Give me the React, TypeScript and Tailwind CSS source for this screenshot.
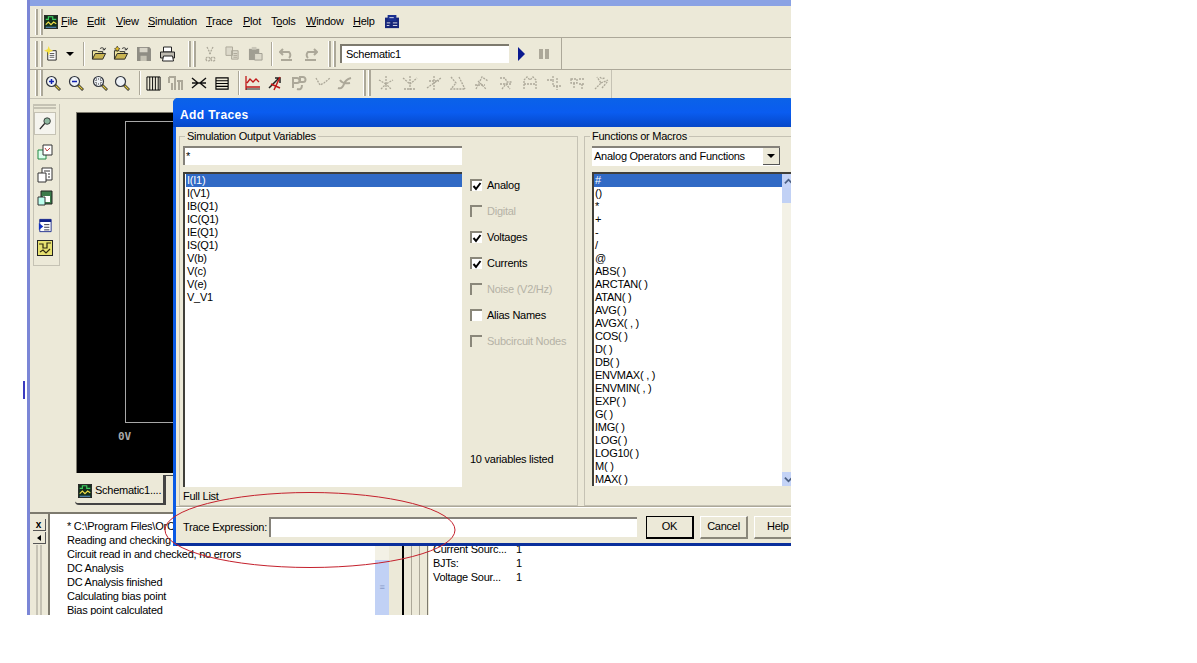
const sans = { fontFamily: '"Liberation Sans", Arial, sans-serif' }

const functions = ['#', '()', '*', '+', '-', '/', '@', 'ABS( )', 'ARCTAN( )', 'ATAN( )', 'AVG( )', 'AVGX( , )', 'COS( )', 'D( )', 'DB( )', 'ENVMAX( , )', 'ENVMIN( , )', 'EXP( )', 'G( )', 'IMG( )', 'LOG( )', 'LOG10( )', 'M( )', 'MAX( )']
const variables = ['I(I1)', 'I(V1)', 'IB(Q1)', 'IC(Q1)', 'IE(Q1)', 'IS(Q1)', 'V(b)', 'V(c)', 'V(e)', 'V_V1']
const filters = [
  { label: 'Analog', checked: true },
  { label: 'Digital', disabled: true },
  { label: 'Voltages', checked: true },
  { label: 'Currents', checked: true },
  { label: 'Noise (V2/Hz)', disabled: true },
  { label: 'Alias Names' },
  { label: 'Subcircuit Nodes', disabled: true },
]
const logLines = ['* C:\\Program Files\\OrC', 'Reading and checking', 'Circuit read in and checked, no errors', 'DC Analysis', 'DC Analysis finished', 'Calculating bias point', 'Bias point calculated']

function Icon({ children, className = 'w-4 h-4' }: { children: React.ReactNode; className?: string }) {
  return (
    <svg viewBox="0 0 16 16" className={`${className} shrink-0`} fill="none">
      {children}
    </svg>
  )
}

function AppIcon() {
  return (
    <Icon className="w-[14px] h-[16px]">
      <rect x="0.5" y="0.5" width="15" height="15" fill="#14301c" stroke="#222" />
      <path d="M2 5h3V2h5v3h4" stroke="#3fd060" strokeWidth="1.3" />
      <path d="M2 11l3-3 3 3 3-3 3 2" stroke="#f4e04a" strokeWidth="1.3" />
      <path d="M2 14h12" stroke="#6aa8f0" />
    </Icon>
  )
}

function Mag({ kind }: { kind: 'in' | 'out' | 'area' | 'fit' }) {
  return (
    <Icon className="w-[16px] h-[16px]">
      <path d="M10 10l5 5" stroke="#222" strokeWidth="2.6" />
      <path d="M10.5 10.5l4 4" stroke="#e0c840" strokeWidth="1.2" />
      <circle cx="6.5" cy="6.5" r="5" fill="#eef2f6" stroke="#30343c" strokeWidth="1.2" />
      {kind === 'in' && <path d="M4 6.5h5M6.5 4v5" stroke="#1020b0" strokeWidth="1.5" />}
      {kind === 'out' && <path d="M4 6.5h5" stroke="#1020b0" strokeWidth="1.5" />}
      {kind === 'area' && <rect x="4" y="4" width="5" height="5" stroke="#333" strokeDasharray="1 1" />}
    </Icon>
  )
}

function Folder({ star }: { star?: boolean }) {
  return (
    <Icon className="w-[16px] h-[15px]">
      <path d="M1 14V5h5l1 1h5v2" stroke="#222" fill="#f0e6a0" />
      <path d="M1 14l3-6h11l-3 6z" fill="#c9b452" stroke="#222" />
      {star ? (
        <path d="M4 0l1 2 2 1-2 1-1 2-1-2-2-1 2-1z" fill="#e8c020" stroke="#222" strokeWidth="0.6" />
      ) : null}
      <path d="M9 3c2-2 4-1 5 1M14 4l1-2M14 4l-2 0" stroke="#222" />
    </Icon>
  )
}

function Ghost({ d, solid }: { d: string; solid?: boolean }) {
  return (
    <Icon className="w-[16px] h-[16px]">
      <path d={d} stroke="#aca899" strokeWidth={solid ? 2 : 1.3} strokeDasharray={solid ? undefined : '2 1'} />
    </Icon>
  )
}

function Grip() {
  return (
    <div className="flex gap-[2px] h-[26px] shrink-0">
      <div className="w-[3px] border-l border-white border-r-2 border-r-[#aca899]" />
      <div className="w-[3px] border-l border-white border-r-2 border-r-[#aca899]" />
    </div>
  )
}

function Sep() {
  return <div className="w-[2px] h-[24px] border-l border-[#aca899] border-r border-r-white shrink-0" />
}

function Chevron({ up }: { up?: boolean }) {
  return (
    <svg viewBox="0 0 10 10" className="w-[9px] h-[9px]" fill="none">
      <path d={up ? 'M1 7l4-4 4 4' : 'M1 3l4 4 4-4'} stroke="#4d6185" strokeWidth="2" />
    </svg>
  )
}

function CheckRow({ label, checked, disabled }: { label: string; checked?: boolean; disabled?: boolean }) {
  return (
    <div className="h-[26px] flex items-center gap-[5px]">
      <div className={`w-[12px] h-[12px] border-t-2 border-l-2 border-t-[#8a877a] border-l-[#8a877a] ${disabled ? 'bg-[#ece9d8]' : 'bg-white'} flex items-center justify-center`}>
        {checked && (
          <svg viewBox="0 0 10 10" className="w-[10px] h-[10px]">
            <path d="M1.5 5l2.5 3L8.5 2" stroke="#000" strokeWidth="2" fill="none" />
          </svg>
        )}
      </div>
      <span className={disabled ? 'text-[#b5b2a6]' : 'text-black'}>{label}</span>
    </div>
  )
}

function Group({ title, className, children }: { title: string; className: string; children: React.ReactNode }) {
  return (
    <div className={`relative border border-[#c5c2b4] ${className}`}>
      <span className="absolute left-[5px] -top-[8px] bg-[#ece9d8] px-[2px] leading-[14px] text-black whitespace-nowrap">{title}</span>
      {children}
    </div>
  )
}

function AddTraces() {
  return (
    <div className="absolute left-[143px] top-[98px] w-[621px] h-[448px] rounded-t-[5px] bg-[#0a5ae6] overflow-hidden flex flex-col text-[11px] tracking-[-0.25px] leading-[13px]">
      <div className="h-[29px] shrink-0 bg-gradient-to-b from-[#0b62e8] via-[#0a5cf0] to-[#0648c8] flex items-center pl-[7px] pt-[5px] text-white font-bold text-[12px] tracking-[0.4px]" style={sans}>
        Add Traces
      </div>
      <div className="flex-1 ml-[3px] bg-[#ece9d8] flex flex-col min-h-0 border-b-[3px] border-[#0a2f9c]">
        <div className="h-[380px] shrink-0 flex pl-[3px] pt-[9px] gap-[6px] border-b border-[#aca899]">
          <Group title="Simulation Output Variables" className="w-[399px] h-[370px] shrink-0">
            <div className="flex pl-[3px] pt-[9px] gap-[8px]">
              <div className="w-[279px] flex flex-col gap-[7px]">
                <div className="h-[19px] bg-white border-t-2 border-l-2 border-t-[#85827a] border-l-[#85827a] pl-[1px] pt-[2px]">*</div>
                <div className="h-[315px] bg-white border-t-2 border-l-2 border-t-[#403f3a] border-l-[#403f3a] pl-[1px]">
                  {variables.map((v, i) => (
                    <div key={v} className={`h-[13px] pl-[1px] ${i === 0 ? 'bg-[#316ac5] text-white' : 'text-black'}`}>{v}</div>
                  ))}
                </div>
              </div>
              <div className="flex-1 flex flex-col">
                <div className="h-[26px]" />
                <div>
                  {filters.map((f) => (
                    <CheckRow key={f.label} label={f.label} checked={f.checked} disabled={f.disabled} />
                  ))}
                </div>
                <div className="mt-[99px]">10 variables listed</div>
              </div>
            </div>
            <div className="mt-[3px] pl-[3px]">Full List</div>
          </Group>
          <Group title="Functions or Macros" className="flex-1 h-[370px] border-r-0 pl-[7px]">
            <div className="pt-[9px] flex flex-col">
              <div className="w-[188px] h-[20px] bg-white border-t-2 border-t-[#85827a] flex items-center pl-[2px] pb-[2px] relative">
                <span className="whitespace-nowrap">Analog Operators and Functions</span>
                <div className="absolute right-[0px] top-0 w-[17px] h-[17px] bg-[#ece9d8] border-r border-b border-[#555] flex items-center justify-center">
                  <div className="w-0 h-0 border-x-[4px] border-x-transparent border-t-[4px] border-t-black" />
                </div>
              </div>
              <div className="mt-[6px] h-[314px] bg-white border-t-2 border-l-2 border-t-[#403f3a] border-l-[#403f3a] flex overflow-hidden">
                <div className="w-[188px] overflow-hidden">
                  {functions.map((f, i) => (
                    <div key={f} className={`h-[13px] pl-[1px] whitespace-nowrap ${i === 0 ? 'bg-[#316ac5] text-white' : 'text-black'}`}>{f}</div>
                  ))}
                </div>
                <div className="flex-1 bg-[#f3f1e6] flex flex-col justify-between">
                  <div>
                    <div className="h-[14px] bg-[#c4d3f6] flex items-center justify-center"><Chevron up /></div>
                    <div className="h-[15px] bg-[#c1d1f5]" />
                  </div>
                  <div className="h-[14px] bg-[#c4d3f6] flex items-center justify-center"><Chevron /></div>
                </div>
              </div>
            </div>
          </Group>
        </div>
        <div className="flex items-center flex-1 pl-[7px] pt-[3px] border-t border-white">
          <span className="w-[86px] shrink-0 whitespace-nowrap">Trace Expression:</span>
          <div className="w-[368px] h-[20px] bg-white border-t-2 border-l-2 border-t-[#85827a] border-l-[#85827a] shrink-0" />
          <button className="ml-[9px] w-[48px] h-[23px] bg-[#ece9d8] border border-black border-b-2 border-r-2 shrink-0">OK</button>
          <button className="ml-[6px] w-[48px] h-[23px] bg-[#ece9d8] border-t border-l border-t-white border-l-white border-r-2 border-b-2 border-r-[#8a877a] border-b-[#8a877a] shrink-0">Cancel</button>
          <button className="ml-[6px] w-[48px] h-[23px] bg-[#ece9d8] border-t border-l border-t-white border-l-white border-r-2 border-b-2 border-r-[#8a877a] border-b-[#8a877a] shrink-0 text-left pl-[12px]">Help</button>
        </div>
      </div>
    </div>
  )
}

export default function App() {
  return (
    <div className="relative w-[1197px] h-[663px] bg-white overflow-hidden" style={sans}>
      <div className="absolute left-[23px] top-[381px] w-[2px] h-[18px] bg-[#3a3ac0]" />
      <div className="relative ml-[27px] w-[764px] h-[615px] overflow-hidden bg-[#ece9d8] flex flex-col border-l-[3px] border-l-[#7b86d6] text-[11px] tracking-[-0.25px] leading-[13px] text-black">
        <div className="h-[6px] shrink-0 bg-[#8aa2e4]" />

        {/* menu bar */}
        <div className="h-[32px] shrink-0 flex items-center pl-[5px] border-b border-[#aca899]">
          <Grip />
          <div className="ml-[1px]"><AppIcon /></div>
          <nav className="flex ml-[3px]">
            <span className="w-[26px]"><u>F</u>ile</span>
            <span className="w-[29px]"><u>E</u>dit</span>
            <span className="w-[32px]"><u>V</u>iew</span>
            <span className="w-[58px]"><u>S</u>imulation</span>
            <span className="w-[37px]"><u>T</u>race</span>
            <span className="w-[28px]"><u>P</u>lot</span>
            <span className="w-[35px]">T<u>o</u>ols</span>
            <span className="w-[47px]"><u>W</u>indow</span>
            <span className="w-[32px]"><u>H</u>elp</span>
          </nav>
          <Icon className="w-[14px] h-[14px]">
            <rect x="0" y="3" width="16" height="12" fill="#16267a" />
            <rect x="3" y="0" width="10" height="7" fill="#1a3090" />
            <path d="M5 3h5M2 9h4M9 9h5M2 12h3M9 12h5" stroke="#e8e8f0" />
          </Icon>
        </div>

        {/* standard toolbar */}
        <div className="h-[32px] shrink-0 flex items-center border-b border-[#aca899]">
          <div className="w-[532px] h-full flex items-center pl-[5px] border-r border-[#aca899]">
            <Grip />
            <div className="ml-[1px]">
              <Icon className="w-[15px] h-[17px]">
                <path d="M4 5h9v10H4z" fill="#fff" stroke="#222" />
                <path d="M6 8h5M6 10h5M6 12h5" stroke="#555" />
                <path d="M5 0l1.2 3.5L10 5 6.2 6.4 5 10 3.8 6.4 0 5l3.8-1.5z" fill="#f5e040" />
              </Icon>
            </div>
            <div className="ml-[7px] w-0 h-0 border-x-[4px] border-x-transparent border-t-[4px] border-t-black" />
            <div className="ml-[9px]"><Sep /></div>
            <div className="ml-[6px]"><Folder /></div>
            <div className="ml-[6px]"><Folder star /></div>
            <div className="ml-[8px]">
              <Icon className="w-[14px] h-[14px]">
                <path d="M0 0h14l2 2v14H0z" fill="#8f8d84" />
                <path d="M3 1h9v5H3z" fill="#d8d5c8" />
                <path d="M4 10h7v6H4z" fill="#c5c2b4" />
              </Icon>
            </div>
            <div className="ml-[8px]">
              <Icon className="w-[17px] h-[16px]">
                <path d="M4 1h8v5H4z" fill="#fff" stroke="#222" />
                <path d="M1 6h14v6H1z" fill="#bdbab0" stroke="#222" />
                <path d="M4 10h9l1 5H3z" fill="#fff" stroke="#222" />
              </Icon>
            </div>
            <div className="ml-[12px]"><Grip /></div>
            <div className="ml-[6px]"><Ghost d="M5 1l4 8M11 1L7 9M4 13a2 2 0 104 0 2 2 0 10-4 0M9 13a2 2 0 104 0 2 2 0 10-4 0" /></div>
            <div className="ml-[7px]">
              <Icon className="w-[15px] h-[15px]">
                <path d="M1 1h7v9H1zM7 5h7v9H7z" fill="#dcd9ca" stroke="#aca899" />
                <path d="M9 8h4M9 10h4M9 12h4" stroke="#aca899" />
              </Icon>
            </div>
            <div className="ml-[8px]">
              <Icon className="w-[15px] h-[15px]">
                <path d="M1 3h11v12H1z" fill="#a09e92" />
                <path d="M4 1h5v3H4z" fill="#c9c6b8" />
                <path d="M7 8h8v7H7z" fill="#dcd9ca" stroke="#a09e92" />
              </Icon>
            </div>
            <div className="ml-[8px]"><Sep /></div>
            <div className="ml-[6px]"><Ghost solid d="M4 3L1 6l3 3M1 6h9a4 4 0 010 6M2 14h11" /></div>
            <div className="ml-[7px]"><Ghost solid d="M12 3l3 3-3 3M15 6H6a4 4 0 000 6M3 14h11" /></div>
            <div className="ml-[10px]"><Grip /></div>
            <div className="ml-[4px] w-[169px] h-[19px] bg-white border-t-2 border-l-2 border-t-[#7d7a6e] border-l-[#7d7a6e] pl-[4px] flex items-center">Schematic1</div>
            <div className="ml-[9px] w-0 h-0 border-y-[7px] border-y-transparent border-l-[7px] border-l-[#0a1a90]" />
            <div className="ml-[14px] flex gap-[2px]">
              <div className="w-[4px] h-[10px] bg-[#aca899]" />
              <div className="w-[4px] h-[10px] bg-[#aca899]" />
            </div>
          </div>
        </div>

        {/* probe toolbar */}
        <div className="h-[29px] shrink-0 flex items-center">
          <div className="w-[582px] h-full flex items-center pl-[5px] pb-[2px] border-r border-b border-[#c5c2b4]">
            <Grip />
            <div className="ml-[2px]"><Mag kind="in" /></div>
            <div className="ml-[7px]"><Mag kind="out" /></div>
            <div className="ml-[8px]"><Mag kind="area" /></div>
            <div className="ml-[6px]"><Mag kind="fit" /></div>
            <div className="ml-[9px]"><Sep /></div>
            <div className="ml-[5px]">
              <Icon className="w-[15px] h-[15px]"><path d="M1 1h14v14H1zM4 1v14M7 1v14M10 1v14M13 1v14" stroke="#000" /></Icon>
            </div>
            <div className="ml-[7px]"><Ghost solid d="M1 2h6v13M1 2v6M9 6h6M11 6v9M14 6v9M4 8v7" /></div>
            <div className="ml-[7px]">
              <Icon><path d="M1 3l6 5-6 5M15 3L9 8l6 5M1 8h14" stroke="#111" strokeWidth="1.4" /></Icon>
            </div>
            <div className="ml-[8px]">
              <Icon className="w-[15px] h-[15px]"><path d="M1 2h13v12H1zM1 5h13M1 8h13M1 11h13" stroke="#000" strokeWidth="1.2" /></Icon>
            </div>
            <div className="ml-[8px]"><Sep /></div>
            <div className="ml-[5px]">
              <Icon><path d="M1 1v14M1 12h14M2 8l3-4 3 3 3-3 3 3" stroke="#c01818" strokeWidth="1.3" /><path d="M1 14h14" stroke="#222" /></Icon>
            </div>
            <div className="ml-[7px]">
              <Icon><path d="M1 13L11 3M7 3h5v5" stroke="#222" strokeWidth="1.5" /><path d="M3 9l9 4M12 2L6 15" stroke="#c01818" strokeWidth="1.5" /></Icon>
            </div>
            <div className="ml-[7px]"><Ghost solid d="M2 13V3h4a2 2 0 010 5H2M9 8V2h3a2 2 0 010 5H9M6 14c3 1 5 0 5-4" /></div>
            <div className="ml-[8px]"><Ghost d="M1 3l4 7 4-2 6-5" /></div>
            <div className="ml-[6px]"><Ghost solid d="M1 13c3 1 5-1 6-4s3-5 7-6M3 5c2 3 5 4 10 3" /></div>
            <div className="ml-[10px]"><Grip /></div>
            {['M8 1v14M1 5l7 4 7-4M3 14l5-5 5 5', 'M1 3l7 6 7-6M8 1v14M2 14h12', 'M1 13L15 3M8 1v14M3 6h10', 'M1 2l5 6-5 6h14M9 2l6 12', 'M2 14L8 2l6 4M4 6l8 8M1 10h10', 'M2 3h5l2 4h5M2 9h12M4 14l4-5 4 5', 'M2 14V5l3-3 3 3 3-3 3 3v9M2 9h12', 'M1 5h6v6h8M7 1v4M11 8V2M11 11v4', 'M1 4h6v4H1zM9 4h6M9 9h6M4 8v6M12 9v6', 'M1 14L7 8 3 2M7 8l7-3M6 2c1 2 4 2 5 0M8 13l6-7'].map((d, i) => (
              <div key={d} className={i === 0 ? 'ml-[7px]' : 'ml-[8px]'}><Ghost d={d} /></div>
            ))}
          </div>
        </div>

        {/* workspace */}
        <div className="h-[413px] shrink-0 flex">
          <div className="w-[46px] shrink-0 pl-[3px] pt-[5px]">
            <div className="w-[27px] h-[162px] pr-[3px] border border-t-0 border-[#c5c2b4] flex flex-col items-center">
              <div className="w-full flex flex-col gap-[1px] pb-[3px]">
                <div className="h-[2px] border-y border-[#c5c2b4]" />
                <div className="h-[2px] border-y border-[#c5c2b4]" />
              </div>
              <div className="w-[22px] h-[23px] bg-[#f5f4ee] border border-[#c5c2b4] flex items-center justify-center">
                <Icon className="w-[13px] h-[13px]"><circle cx="10" cy="5" r="4" fill="#8fb8a0" stroke="#222" /><path d="M7 8l-6 7" stroke="#222" strokeWidth="1.5" /></Icon>
              </div>
              <div className="mt-[9px]">
                <Icon><path d="M1 6h8v9H1z" fill="#dfe" stroke="#284" /><path d="M6 1h9v10H6z" fill="#fff" stroke="#333" /><path d="M8 4l2 3 3-3" stroke="#c04040" /></Icon>
              </div>
              <div className="mt-[7px]">
                <Icon><path d="M5 1h10v12H5z" fill="#fff" stroke="#333" /><path d="M1 6h8v9H1z" fill="#fff" stroke="#333" /><path d="M7 4h6M11 7h2M11 10h2" stroke="#333" /></Icon>
              </div>
              <div className="mt-[7px]">
                <Icon><path d="M4 1h11v13H4z" fill="#3a7a4a" stroke="#222" /><path d="M6 6h7v6H6z" fill="#fff" /><path d="M1 7h7v8H1z" fill="#bfe" stroke="#333" /></Icon>
              </div>
              <div className="mt-[12px]">
                <Icon className="w-[14px] h-[15px]"><path d="M2 1h13v14H2z" fill="#fff" stroke="#112288" /><path d="M2 1h13v3H2z" fill="#112288" /><path d="M7 7h6M7 10h6M7 13h6" stroke="#223" /><path d="M1 5l5 4-5 4z" fill="#1030c0" /></Icon>
              </div>
              <div className="mt-[7px]">
                <Icon className="w-[16px] h-[16px]"><rect x="0.5" y="0.5" width="15" height="15" fill="#e6e070" stroke="#222" /><path d="M2 4h4v4h4V3h4M3 12l3-2 3 3 4-4" stroke="#302a10" strokeWidth="1.2" /></Icon>
              </div>
            </div>
          </div>
          <div className="flex-1 flex flex-col pt-[13px] min-w-0">
            <div className="h-[361px] bg-black border-t border-l border-[#7d7a6e] pt-[8px] pl-[48px]">
              <div className="h-[302px] border-t border-l border-[#a8a8a8]">
                <div className="h-[301px] border-b border-[#a8a8a8]" />
              </div>
              <div className="-ml-[7px] mt-[7px] w-[16px] text-[#a8a8a8] font-bold text-[11px] tracking-normal" style={{ fontFamily: '"DejaVu Sans Mono", monospace' }}>0V</div>
            </div>
            <div className="flex pt-[2px] h-[39px] -ml-[1px]">
              <div className="w-[90px] h-[30px] bg-[#ece9d8] border-r-2 border-b-2 border-r-[#444] border-b-[#444] rounded-bl-[4px] flex items-center pl-[3px] pt-[3px] gap-[3px]">
                <AppIcon />
                <span className="whitespace-nowrap">Schematic1....</span>
              </div>
              <div className="w-[10px] h-[30px] border-l border-t border-[#444]" />
            </div>
          </div>
        </div>

        {/* output panels */}
        <div className="flex-1 flex min-h-0 border-t-2 border-[#7d7a6e]">
          <div className="w-[20px] shrink-0 flex flex-col items-center pt-[5px] gap-[1px] border-r-2 border-[#7d7a6e]">
            <div className="w-[13px] h-[12px] bg-[#ece9d8] border-r border-b border-[#555] flex items-center justify-center text-[10px] font-bold leading-none">x</div>
            <div className="w-[13px] h-[12px] bg-[#ece9d8] border-r border-b border-[#555] flex items-center justify-center">
              <div className="w-0 h-0 border-y-[3px] border-y-transparent border-r-[4px] border-r-black" />
            </div>
            <div className="flex-1 flex gap-[2px]">
              <div className="w-[2px] bg-[#c5c2b4]" />
              <div className="w-[2px] bg-[#c5c2b4]" />
            </div>
          </div>
          <div className="w-[325px] shrink-0 bg-white pl-[17px] pt-[5px] leading-[14px] whitespace-nowrap overflow-hidden">
            {logLines.map((l) => <div key={l}>{l}</div>)}
          </div>
          <div className="w-[14px] shrink-0 bg-[#f3f1e6] flex flex-col justify-end">
            <div className="h-[55px] bg-[#c1d1f5] flex items-center justify-center text-[#8a9cc8] text-[9px]">≡</div>
          </div>
          <div className="w-[15px] shrink-0 border-r-2 border-black" />
          <div className="w-[25px] shrink-0 flex gap-[7px] pl-[7px]">
            <div className="w-[1px] bg-[#aca899]" />
            <div className="w-[1px] bg-[#aca899]" />
            <div className="w-[1px] bg-[#7d7a6e]" />
          </div>
          <div className="flex-1 bg-white pl-[4px] pt-[28px] leading-[14px]">
            {[['Current Sourc...', '1'], ['BJTs:', '1'], ['Voltage Sour...', '1']].map(([k, v]) => (
              <div key={k} className="flex">
                <span className="w-[83px] whitespace-nowrap">{k}</span>
                <span>{v}</span>
              </div>
            ))}
          </div>
        </div>

        <AddTraces />
      </div>

      {/* hand-drawn annotation */}
      <svg className="absolute left-[160px] top-[488px] w-[300px] h-[84px]" viewBox="0 0 300 84" fill="none">
        <ellipse cx="150" cy="42" rx="145" ry="37.5" stroke="#c4202c" strokeWidth="1" />
      </svg>
    </div>
  )
}
